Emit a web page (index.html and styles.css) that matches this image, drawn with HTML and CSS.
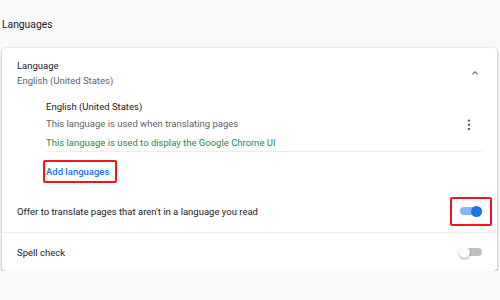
FILE: index.html
```html
<!DOCTYPE html>
<html lang="en">
<head>
    <meta charset="UTF-8">
    <meta name="viewport" content="width=device-width, initial-scale=1.0">
    <title>Languages</title>
    <link rel="stylesheet" href="styles.css">
</head>
<body>
    <div class="page">
        <h2 class="page-title">Languages</h2>

        <div class="card">
            <!-- Language section -->
            <div class="row-head">
                <div>
                    <div class="label">Language</div>
                    <div class="sub">English (United States)</div>
                </div>
                <svg class="chevron" width="12" height="12" viewBox="0 0 24 24">
                    <path d="M7.41 15.41L12 10.83l4.59 4.58L18 14l-6-6-6 6z" fill="#5f6368"/>
                </svg>
            </div>

            <div class="lang-item">
                <div>
                    <div class="label">English (United States)</div>
                    <div class="sub">This language is used when translating pages</div>
                    <div class="note">This language is used to display the Google Chrome UI</div>
                </div>
                <svg class="dots" width="4" height="12" viewBox="0 0 4 12">
                    <circle cx="2" cy="1.6" r="1.2" fill="#5f6368"/>
                    <circle cx="2" cy="5.8" r="1.2" fill="#5f6368"/>
                    <circle cx="2" cy="10" r="1.2" fill="#5f6368"/>
                </svg>
            </div>

            <div class="add-row">
                <a href="#" class="add-link marked">Add languages</a>
            </div>

            <!-- Toggles -->
            <div class="row offer">
                <span>Offer to translate pages that aren't in a language you read</span>
                <span class="toggle on marked-toggle"><span class="track"></span><span class="knob"></span></span>
            </div>
            <div class="row spell">
                <span>Spell check</span>
                <span class="toggle"><span class="track"></span><span class="knob"></span></span>
            </div>
        </div>
    </div>
</body>
</html>
```

FILE: styles.css
```css
body {
    margin: 0;
    background-color: #f8f9fa;
    font-family: Roboto, "Liberation Sans", Arial, sans-serif;
    font-size: 9.5px;
    color: #202124;
}
.page {
    padding: 0 3px 0 2px;
}
.page-title {
    margin: 0;
    padding-top: 17px;
    padding-bottom: 15px;
    font-size: 10.3px;
    font-weight: 400;
    line-height: 16px;
    color: #202124;
}
.card {
    background: #fff;
    border-radius: 4px;
    box-shadow: 0 1px 2px rgba(60, 64, 67, 0.3), 0 1px 3px 1px rgba(60, 64, 67, 0.15);
}
.row-head {
    display: flex;
    justify-content: space-between;
    align-items: center;
    padding: 10px 16px 10px 15px;
    line-height: 15px;
}
.label {
    color: #202124;
}
.sub {
    color: #5f6368;
}
.chevron {
    display: block;
}
.lang-item {
    display: flex;
    justify-content: space-between;
    align-items: center;
    margin: 0 15px 0 44px;
    padding-right: 11px;
    line-height: 17px;
    border-bottom: 1px solid #ebedf0;
}
.note {
    margin-top: 2px;
    color: #2a8a45;
}
.dots {
    display: block;
}
.add-row {
    padding: 11px 0 10px 44px;
    line-height: 17px;
}
.add-link {
    color: #1a73e8;
    font-weight: 500;
    text-decoration: none;
}
.marked,
.marked-toggle {
    position: relative;
}
.marked::after,
.marked-toggle::after {
    content: "";
    position: absolute;
    border: 2px solid #f5141b;
    border-radius: 2px;
}
.marked::after {
    left: -3px;
    right: -8px;
    top: -6px;
    bottom: -6px;
}
.marked-toggle::after {
    left: -9px;
    right: -10px;
    top: -9px;
    bottom: -9px;
}
.row {
    display: flex;
    justify-content: space-between;
    align-items: center;
    padding: 0 15px;
}
.offer {
    height: 42px;
    border-bottom: 1px solid #ebedf0;
}
.spell {
    height: 38px;
}
.toggle {
    position: relative;
    display: block;
    width: 23px;
    height: 11px;
}
.track {
    position: absolute;
    left: 1px;
    right: 0;
    top: 1.5px;
    height: 8px;
    border-radius: 4px;
    background: #bdc1c6;
}
.knob {
    position: absolute;
    left: 0;
    top: 0;
    width: 11px;
    height: 11px;
    border-radius: 50%;
    background: #fff;
    box-shadow: 0 1px 2px rgba(0, 0, 0, 0.4);
}
.toggle.on .track {
    background: #8ab4f8;
}
.toggle.on .knob {
    left: auto;
    right: 0;
    background: #1a73e8;
    box-shadow: none;
}
```
